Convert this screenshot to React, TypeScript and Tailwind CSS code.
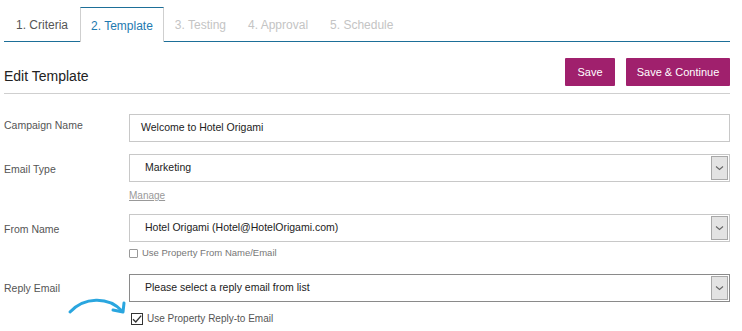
import React from "react";

const font = { fontFamily: '"Liberation Sans", Arial, sans-serif' };

function Chevron() {
  return (
    <svg width="9" height="6" viewBox="0 0 9 6" className="block">
      <path d="M1 1.5 L4.5 4.5 L8 1.5" fill="none" stroke="#666" strokeWidth="1.1" />
    </svg>
  );
}

function Select({ value, dark }: { value: string; dark?: boolean }) {
  return (
    <div
      className={`flex h-[28px] w-full items-stretch border bg-white p-[1px] ${
        dark ? "border-[#8a8a8a]" : "border-[#c8c8c8]"
      }`}
    >
      <div className="flex flex-1 items-center pl-[14px] text-[10.5px] text-[#222]">{value}</div>
      <div className="flex w-[17px] items-center justify-center border border-[#a8a8a8] bg-[#e3e3e3]">
        <Chevron />
      </div>
    </div>
  );
}

export default function App() {
  return (
    <div className="relative w-[742px] h-[331px] bg-white overflow-hidden" style={font}>
      <div className="pl-[4px] w-[730px]">
        {/* tabs */}
        <div className="flex h-[42px] items-end border-b border-[#1d6f98] pt-[7px] text-[12px]">
          <div className="flex h-[34px] items-center px-[12px] pt-[2px] text-[#555]">1. Criteria</div>
          <div className="-mb-px flex h-[35px] items-center border-x border-t border-x-[#cfcfcf] border-t-[#1d6f98] bg-white px-[10px] pt-[1px] text-[#1e7ab0]">
            2. Template
          </div>
          <div className="flex h-[34px] items-center px-[11px] pt-[2px] text-[#c4c4c4]">3. Testing</div>
          <div className="flex h-[34px] items-center px-[11px] pt-[2px] text-[#c4c4c4]">4. Approval</div>
          <div className="flex h-[34px] items-center px-[11px] pt-[2px] text-[#c4c4c4]">5. Schedule</div>
        </div>

        {/* header */}
        <div className="flex h-[52px] items-start justify-between border-b border-[#cfcfcf]">
          <div className="mt-[24px] text-[14px] leading-[20px] text-[#222]">Edit Template</div>
          <div className="mt-[16px] flex gap-[11px]">
            <button className="h-[28px] w-[50px] rounded-[1px] bg-[#a0206d] text-[11px] text-white">Save</button>
            <button className="h-[28px] w-[104px] rounded-[1px] bg-[#a0206d] text-[11px] text-white">
              Save &amp; Continue
            </button>
          </div>
        </div>

        {/* form */}
        <div className="grid grid-cols-[125px_1fr] pt-[20px] text-[10.5px] text-[#555]">
          <div className="pt-[4px]">Campaign Name</div>
          <div className="flex h-[28px] items-center border border-[#c8c8c8] pl-[11px] text-[#222]">
            Welcome to Hotel Origami
          </div>

          <div className="pt-[8px] mt-[12px]">Email Type</div>
          <div className="mt-[12px]">
            <Select value="Marketing" />
            <div className="pt-[6px] text-[10px] text-[#999] underline">Manage</div>
          </div>

          <div className="pt-[8px] mt-[11px]">From Name</div>
          <div className="mt-[11px]">
            <Select value="Hotel Origami (Hotel@HotelOrigami.com)" />
            <div className="flex items-center gap-[4px] pt-[4px] text-[9.5px] text-[#777]">
              <span className="block h-[9px] w-[9px] rounded-[1px] border border-[#999] bg-white" />
              Use Property From Name/Email
            </div>
          </div>

          <div className="pt-[7px] mt-[14px]">Reply Email</div>
          <div className="mt-[14px]">
            <Select value="Please select a reply email from list" dark />
            <div className="flex items-center gap-[4px] pt-[9px] pl-[2px] text-[10px] text-[#555]">
              <span className="relative block h-[12px] w-[12px] border border-[#333] bg-white">
                <svg width="12" height="12" viewBox="0 0 12 12" className="absolute left-[-1px] top-[-1px]">
                  <path d="M2 6.2 L4.8 9 L10.2 2.6" fill="none" stroke="#333" strokeWidth="1.4" />
                </svg>
              </span>
              Use Property Reply-to Email
            </div>
          </div>
        </div>
      </div>

      {/* arrow */}
      <svg
        width="70"
        height="30"
        viewBox="0 0 70 30"
        className="absolute left-[66px] top-[296px]"
      >
        <path d="M4 16 C 18 1, 42 0, 56 15" fill="none" stroke="#2aa6df" strokeWidth="3" strokeLinecap="round" />
        <path d="M47 14 L57 16 L58 7" fill="none" stroke="#2aa6df" strokeWidth="3" strokeLinecap="round" strokeLinejoin="round" />
      </svg>
    </div>
  );
}
